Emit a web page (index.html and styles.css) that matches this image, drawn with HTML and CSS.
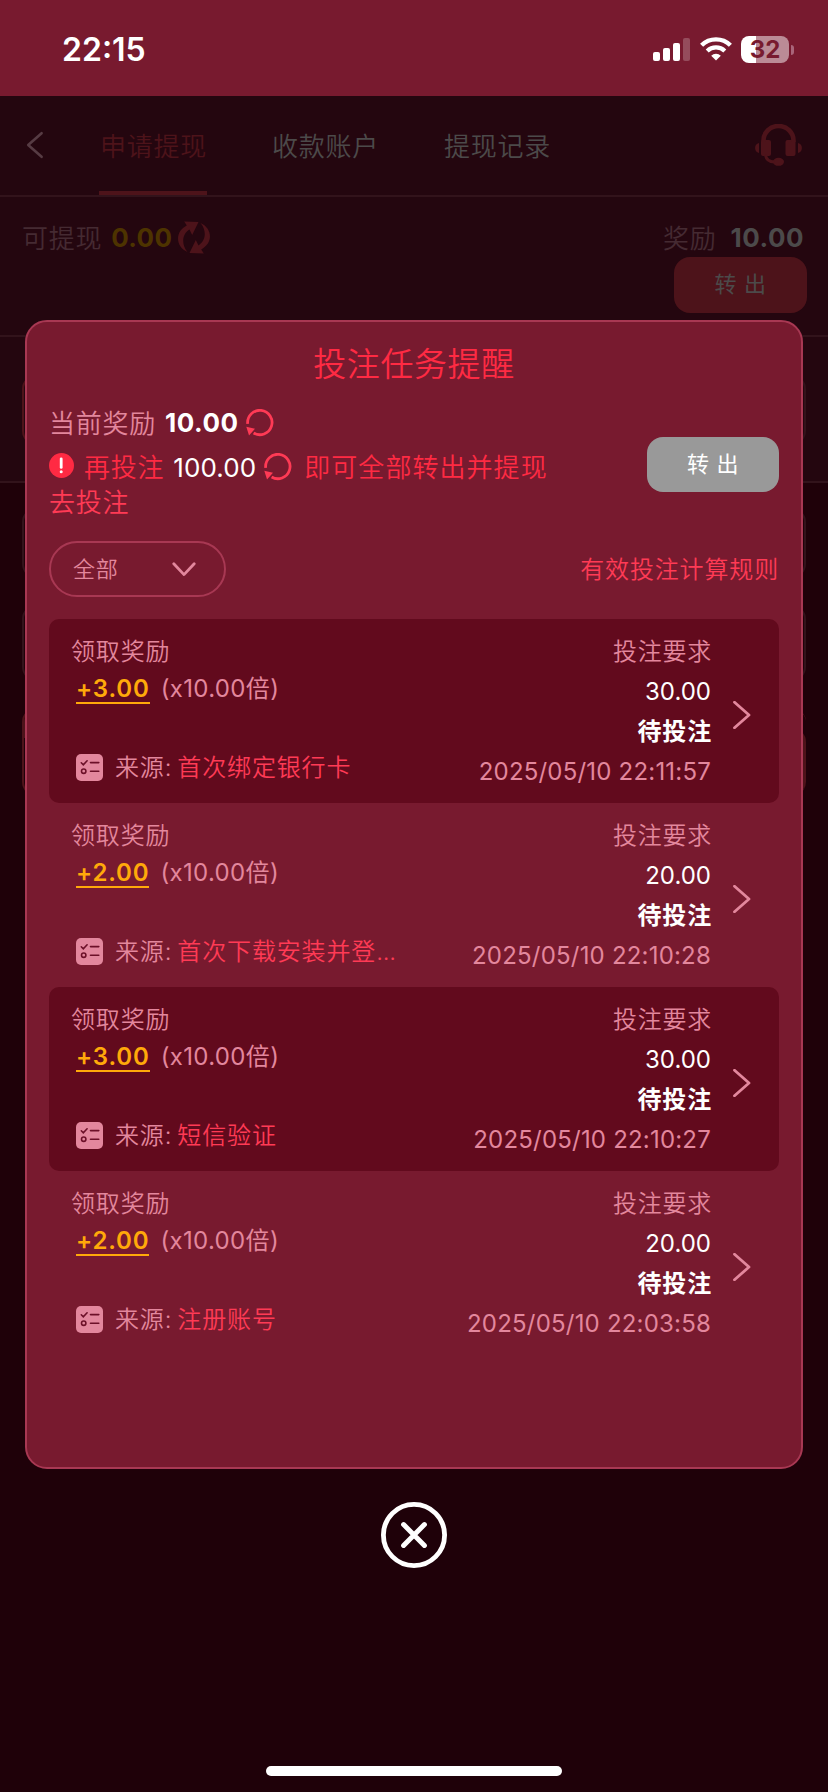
FILE: index.html
```html
<!DOCTYPE html>
<html lang="zh-CN">
<head>
<meta charset="utf-8">
<title>投注任务提醒</title>
<link rel="stylesheet" href="styles.css">
</head>
<body>
<svg width="0" height="0" class="defs">
  <symbol id="reload" viewBox="0 0 28 28">
    <path d="M1.700 14.800A12.200 12.200 0 1 1 7.600 24" fill="none" stroke="currentColor" stroke-width="2.800"/>
    <path d="M.300 17.800l8.700 2-6 6.800z" fill="currentColor"/>
  </symbol>
  <symbol id="task" viewBox="0 0 27 27">
    <rect width="27" height="27" rx="5" fill="#e3879d"/>
    <path d="M5.300 8.800l2 2 3.800-4M14.500 8.600h8.300M14.500 17.200h8.300" fill="none" stroke="#6c1028" stroke-width="1.600" stroke-linecap="round"/>
    <circle cx="7.700" cy="17.200" r="2.200" fill="none" stroke="#6c1028" stroke-width="1.600"/>
  </symbol>
  <symbol id="next" viewBox="0 0 18 28">
    <path d="M1.500 1.200L16 14 1.500 26.800" fill="none" stroke="#e3879d" stroke-width="2.800" stroke-linecap="round" stroke-linejoin="round"/>
  </symbol>
</svg>
<div class="screen">
  <header class="status">
    <span class="time">22:15</span>
    <div class="indicators">
      <svg class="signal" width="37" height="24" viewBox="0 0 37 24"><g fill="#fff"><rect y="14" width="7" height="9" rx="2"/><rect x="10" y="10" width="7" height="13" rx="2"/><rect x="20" y="5" width="7" height="18" rx="2"/><rect x="30" width="7" height="23" rx="2" opacity=".22"/></g></svg>
      <svg class="wifi" width="32" height="24" viewBox="0 0 32 24"><path d="M1.600 8.200A20.600 20.600 0 0 1 30.400 8.200" fill="none" stroke="#fff" stroke-width="4.400"/><path d="M7.200 14A12.600 12.600 0 0 1 24.800 14" fill="none" stroke="#fff" stroke-width="4.200"/><path d="M16 23.600l-4.800-4.900a6.800 6.800 0 0 1 9.600 0z" fill="#fff"/></svg>
      <div class="battery">32</div><i class="nub"></i>
    </div>
  </header>

  <nav class="nav">
    <svg class="back" width="18" height="28" viewBox="0 0 18 28"><path d="M15.600 2.200L2.200 14l13.400 11.800" fill="none" stroke="#563b43" stroke-width="2.600" stroke-linecap="round" stroke-linejoin="round"/></svg>
    <div class="tabs">
      <span class="tab on">申请提现</span>
      <span class="tab">收款账户</span>
      <span class="tab">提现记录</span>
    </div>
    <svg class="service" width="47" height="42" viewBox="0 0 47 42"><g fill="#4d131a"><rect x="6" y="16" width="10" height="16" rx="2"/><rect x="30.500" y="16" width="10" height="16" rx="2"/><path d="M4 19v10C-1.200 28-1.200 20 4 19zM43 19v10c5.200-1 5.200-9 0-10z"/><ellipse cx="23.500" cy="37.800" rx="5.500" ry="4"/></g><path d="M8.500 18v-1.500a15 14.500 0 0 1 30 0V18" fill="none" stroke="#4d131a" stroke-width="4.600"/><path d="M10.500 31q1 6.800 9 7" fill="none" stroke="#4d131a" stroke-width="3"/></svg>
  </nav>

  <section class="balance">
    <div class="avail"><span class="label">可提现</span><b class="gold">0.00</b>
      <svg width="32" height="33" viewBox="0 0 32 33"><g fill="#4d131a"><path d="M6.200.600L20.500 1 14.200 14 11.500 8.600C3.500 13.500 3.500 24 9.500 31-3.500 25-2.500 10 8.800 4.600z"/><path d="M25.800 32.400L11.500 32 17.800 19l2.700 5.400C28.500 19.500 28.500 9 22.500 2 35.500 8 34.500 23 23.200 28.400z"/></g></svg>
    </div>
    <div class="bonus">
      <div class="bonus-line"><span class="label">奖励</span><b>10.00</b></div>
      <span class="out">转 出</span>
    </div>
  </section>
  <section class="account"><div class="field field-hot"></div></section>
  <section class="form">
    <div class="field"></div>
    <div class="field field-tall"></div>
    <div class="field field-amount"><i class="field-head"></i><i class="field-side"></i></div>
  </section>

  <div class="overlay">
    <div class="modal">
      <h1>投注任务提醒</h1>
      <div class="summary">
        <div class="facts">
          <div class="fact"><span class="pink">当前奖励</span><b class="sum">10.00</b><svg class="reload"><use href="#reload"/></svg></div>
          <div class="fact need">
            <svg class="warn" width="25" height="25" viewBox="0 0 25 25"><circle cx="12.500" cy="12.500" r="12.500" fill="#ff2a43"/><path d="M12.200 5.800v8.600" stroke="#fff" stroke-width="2.800" stroke-linecap="round"/><circle cx="12.200" cy="18.700" r="1.500" fill="#fff"/></svg>
            <span class="more">再投注</span><span class="amount">100.00</span><svg class="reload"><use href="#reload"/></svg><span class="rest">即可全部转出并提现</span>
          </div>
          <a class="go">去投注</a>
        </div>
        <span class="transfer">转 出</span>
      </div>
      <div class="filter">
        <div class="select"><span>全部</span><svg width="24" height="15" viewBox="0 0 24 15"><path d="M1.800 1.800L12 12.600 22.200 1.800" fill="none" stroke="#e3879d" stroke-width="2.800" stroke-linecap="round" stroke-linejoin="round"/></svg></div>
        <a class="rules">有效投注计算规则</a>
      </div>
      <div class="list">
        <article class="row dark">
          <div class="left"><span class="name">领取奖励</span><div class="gain"><b>+3.00</b><span>(x10.00倍)</span></div><div class="source"><svg width="27" height="27"><use href="#task"/></svg><span class="from">来源:</span><a>首次绑定银行卡</a></div></div>
          <div class="right"><span class="req">投注要求</span><span class="white">30.00</span><b>待投注</b><span class="date">2025/05/10 22:11:57</span></div>
          <svg class="next"><use href="#next"/></svg>
        </article>
        <article class="row">
          <div class="left"><span class="name">领取奖励</span><div class="gain"><b>+2.00</b><span>(x10.00倍)</span></div><div class="source"><svg width="27" height="27"><use href="#task"/></svg><span class="from">来源:</span><a>首次下载安装并登<span class="dots">...</span></a></div></div>
          <div class="right"><span class="req">投注要求</span><span class="white">20.00</span><b>待投注</b><span class="date">2025/05/10 22:10:28</span></div>
          <svg class="next"><use href="#next"/></svg>
        </article>
        <article class="row dark">
          <div class="left"><span class="name">领取奖励</span><div class="gain"><b>+3.00</b><span>(x10.00倍)</span></div><div class="source"><svg width="27" height="27"><use href="#task"/></svg><span class="from">来源:</span><a>短信验证</a></div></div>
          <div class="right"><span class="req">投注要求</span><span class="white">30.00</span><b>待投注</b><span class="date">2025/05/10 22:10:27</span></div>
          <svg class="next"><use href="#next"/></svg>
        </article>
        <article class="row">
          <div class="left"><span class="name">领取奖励</span><div class="gain"><b>+2.00</b><span>(x10.00倍)</span></div><div class="source"><svg width="27" height="27"><use href="#task"/></svg><span class="from">来源:</span><a>注册账号</a></div></div>
          <div class="right"><span class="req">投注要求</span><span class="white">20.00</span><b>待投注</b><span class="date">2025/05/10 22:03:58</span></div>
          <svg class="next"><use href="#next"/></svg>
        </article>
      </div>
    </div>
    <svg class="close" width="66" height="66" viewBox="0 0 66 66"><circle cx="33" cy="33" r="30.600" fill="none" stroke="#fff" stroke-width="4.800"/><path d="M22.600 22.600l20.800 20.800M43.400 22.600L22.600 43.400" stroke="#fff" stroke-width="5" stroke-linecap="round"/></svg>
    <div class="home"></div>
  </div>
</div>
</body>
</html>
```
FILE: styles.css
```css
* { box-sizing: border-box; }
body { margin: 0; background: #1f0109; }
svg { display: block; flex: none; }
.defs { position: absolute; }
.screen {
  position: relative;
  width: 828px;
  height: 1792px;
  overflow: hidden;
  background: #1f0109;
  font-family: Inter, "Noto Sans CJK SC", sans-serif;
  font-weight: 350;
  font-size: 26px;
  letter-spacing: .75px;
  white-space: nowrap;
}
.status {
  display: flex;
  justify-content: space-between;
  height: 96px;
  padding: 0 34px 0 62px;
  background: #781a2f;
  color: #fff;
}
.time { font-size: 32px; font-weight: 600; line-height: 100px; letter-spacing: 0; }
.indicators { display: flex; align-items: flex-start; padding-top: 36px; }
.signal { margin: 2px 10px 0 0; }
.wifi { margin: 1px 9px 0 0; }
.battery {
  width: 48px;
  height: 27px;
  border-radius: 8px;
  background: linear-gradient(90deg, #fff 15px, #bb8b96 15px);
  color: #781a2f;
  font-size: 24px;
  font-weight: 700;
  line-height: 27px;
  letter-spacing: 0;
  text-align: center;
}
.nub { width: 3px; height: 10px; margin: 9px 0 0 2px; border-radius: 0 3px 3px 0; background: #a9657a; }

.nav {
  display: flex;
  height: 101px;
  padding: 0 26px;
  border-bottom: 2px solid #32131b;
  background: #24060f;
}
.back { margin-top: 35px; }
.tabs { display: flex; gap: 64px; margin-left: 55px; }
.tab { width: 108px; padding-left: 1px; line-height: 101px; height: 99px; color: #4c4a4a; }
.tab.on {
  color: #4d131a;
  background: linear-gradient(#4d131a, #4d131a) bottom / 100% 4px no-repeat;
}
.service { margin: 28px 0 0 auto; }
.balance {
  display: flex;
  justify-content: space-between;
  height: 140px;
  padding: 20px 21px 0 22px;
  border-bottom: 2px solid #32131b;
  background: #24060f;
}
.avail, .bonus-line { display: flex; align-items: center; height: 40px; }
.label { margin-top: -1px; color: #452a32; }
.balance b { font-weight: 700; color: #4c4a4a; letter-spacing: .500px; }
.balance .gold { margin: 0 6px 0 9px; color: #4d3300; letter-spacing: .300px; }
.bonus { display: flex; flex-direction: column; align-items: flex-end; }
.bonus-line { padding-right: 3px; gap: 14px; }
.out, .transfer {
  width: 132px;
  height: 55px;
  border-radius: 16px;
  line-height: 55px;
  text-align: center;
  font-size: 22px;
  font-weight: 400;
  letter-spacing: .600px;
}
.out { margin-top: -3px; height: 56px; background: #4d131a; color: #4c4a4a; width: 133px; transform: translateY(3px); }
.account { height: 146px; padding: 38px 22px 0; background: #24060f; border-bottom: 2px solid #32131b; }
.form { display: grid; gap: 27px; padding: 25px 22px; }
.field { height: 70px; border: 2px solid #32131b; border-radius: 14px; }
.field-hot { border-left-color: #4d131a; }
.field-tall { height: 76px; }
.field-amount { display: flex; justify-content: space-between; height: 88px; overflow: hidden; border-color: #4d131a; border-right: 0; }
.field-head { width: 100px; height: 28px; background: #4d131a; }
.field-side { width: 100px; height: 68px; margin-top: 18px; border-radius: 14px; background: #4d131a; }

.overlay {
  position: absolute;
  inset: 320px 0 0;
  display: flex;
  flex-direction: column;
  align-items: center;
}
.modal {
  width: 778px;
  height: 1149px;
  padding: 0 22px;
  border: 2px solid #a83853;
  border-radius: 22px;
  background: #781a2f;
  color: #e3879d;
}
h1 {
  height: 82px;
  margin: 0;
  color: #ff2a43;
  font-size: 33px;
  font-weight: 350;
  line-height: 85px;
  letter-spacing: .600px;
  text-align: center;
}
.summary { display: flex; height: 137px; }
.fact { display: flex; align-items: center; height: 38px; }
.pink { margin-top: -4px; }
.more, .rest { margin-top: -3px; }
.sum { margin: -1px 8px 0 9px; color: #fff; font-weight: 700; letter-spacing: .500px; }
.reload { width: 28px; height: 28px; color: #ff3a55; }
.need { height: 50px; color: #ff2a43; }
.warn { margin: -4px 10px 0 0; }
.amount { margin: 0 8px 0 9px; color: #fff; font-weight: 400; letter-spacing: .100px; }
.rest { margin-left: 12px; letter-spacing: 1.050px; }
.go { display: block; line-height: 21px; color: #ff3a55; }
.transfer { margin: 33px 0 0 auto; background: #999; color: #fff; }
.filter { display: flex; justify-content: space-between; align-items: center; height: 56px; }
.select {
  display: flex;
  justify-content: space-between;
  align-items: center;
  width: 177px;
  height: 56px;
  padding: 0 28px 0 22px;
  border: 2px solid #a83853;
  border-radius: 28px;
  font-size: 22px;
  line-height: 52px;
}
.rules { margin-top: -3px; font-size: 24px; color: #ff3a55; letter-spacing: .850px; }
.list { padding-top: 22px; font-size: 24px; }
.row { display: flex; height: 184px; padding: 0 28px 0 22px; border-radius: 10px; }
.row.dark { background: #620a1d; }
.left { flex: 1; padding-top: 13px; letter-spacing: .850px; }
.name { display: block; height: 39px; line-height: 40px; }
.gain { display: flex; height: 33px; padding-left: 5px; }
.gain b { height: 33px; border-bottom: 2px solid #ffa90a; color: #ffa90a; font-weight: 600; line-height: 35px; }
.gain span { margin-left: 11px; line-height: 35px; font-weight: 400; letter-spacing: .350px; }
.source { display: flex; align-items: center; height: 40px; margin-top: 43px; padding-left: 5px; }
.from { margin: -3px 5px 0 12px; }
.source a { margin-top: -3px; color: #ff3a55; }
.dots { letter-spacing: -.200px; }
.right {
  display: flex;
  flex-direction: column;
  align-items: flex-end;
  padding-top: 12.500px;
  line-height: 40px;
  letter-spacing: .850px;
}
.right .req { margin-right: -1px; letter-spacing: .750px; }
.right b { margin-right: -1px; color: #fff; font-weight: 700; }
.right .white { color: #fff; font-weight: 400; letter-spacing: 0; }
.right .date { font-weight: 400; letter-spacing: .200px; }
.next { width: 18px; height: 28px; margin: 82px 0 0 22px; }
.close { margin-top: 33px; }
.home { width: 296px; height: 10px; margin-top: auto; margin-bottom: 16px; border-radius: 5px; background: #fff; }
```
